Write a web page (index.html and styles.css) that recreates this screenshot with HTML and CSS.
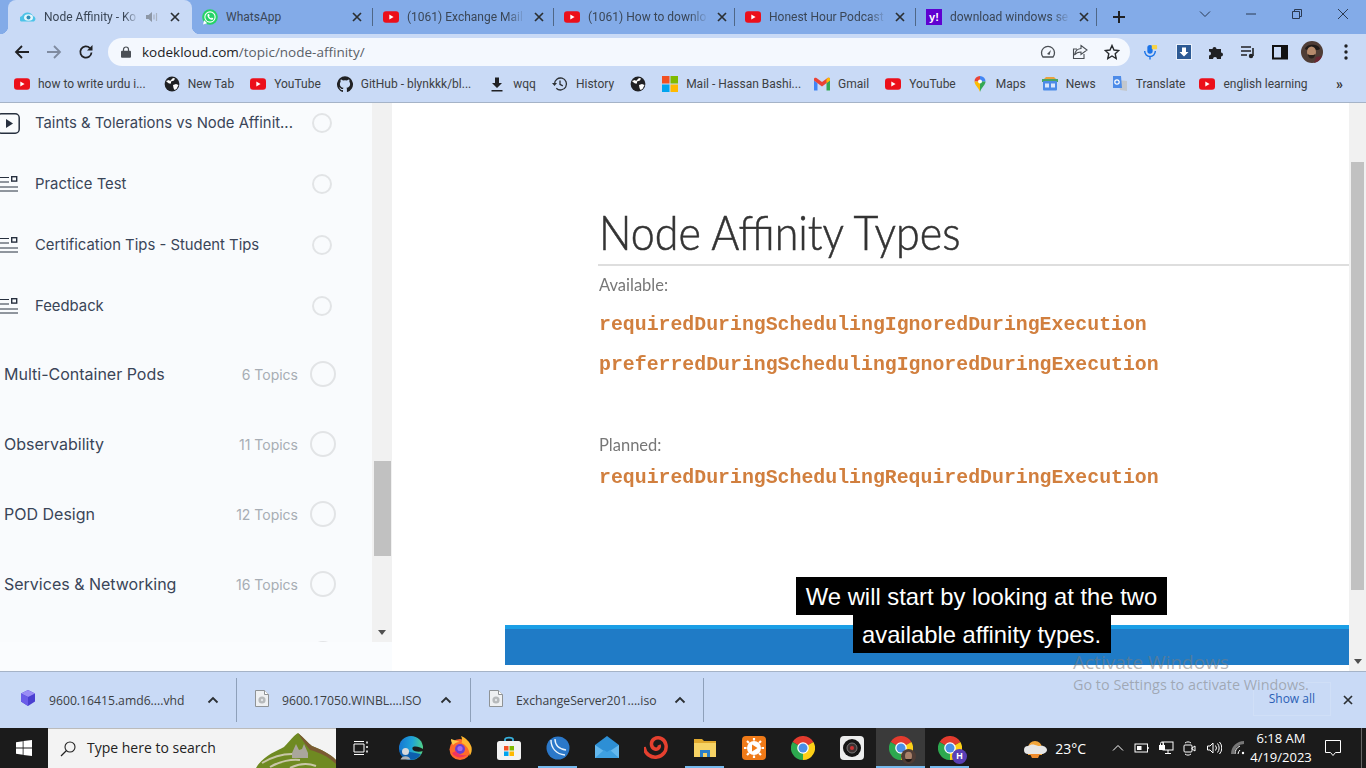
FILE: index.html
```html
<!DOCTYPE html>
<html lang="en">
<head>
<meta charset="utf-8">
<title>Node Affinity - KodeKloud</title>
<link rel="stylesheet" href="styles.css">
</head>
<body>
<svg class="defs" aria-hidden="true">
  <symbol id="yt" viewBox="0 0 16 12"><rect width="16" height="11.4" y=".3" rx="3" fill="#ec0f1a"/><path d="M6.3 3.6v4.8L10.6 6z" fill="#fff"/></symbol>
  <symbol id="x" viewBox="0 0 10 10"><path d="M1 1l8 8M9 1L1 9" stroke="#2b2f33" stroke-width="1.7" fill="none"/></symbol>
  <symbol id="globe" viewBox="0 0 16 16"><circle cx="8" cy="8" r="7.4" fill="#202124"/><path d="M2 5l3-1 1 1 3-3 2 .5-1 2-3 1 0 2-2 0-2-1.500zM9 9l3-1 2.500 1-2 4-2 1-1-2z" fill="#fff"/></symbol>
  <symbol id="chev" viewBox="0 0 12 8"><path d="M1.500 6.500L6 2l4.500 4.500" stroke="#2b2f33" stroke-width="1.800" fill="none"/></symbol>
  <symbol id="iso" viewBox="0 0 14 17"><path d="M.5.500h9l4 4v12H.5z" fill="#eef0f2" stroke="#8f9396"/><path d="M9.500.500v4h4" fill="#fff" stroke="#8f9396"/><circle cx="7" cy="10" r="3.600" fill="#b6b9bb"/><circle cx="7" cy="10" r="1.200" fill="#e4e6e8"/></symbol>
  <symbol id="lines" viewBox="0 0 18 16"><path d="M0 1.500h9M0 6h9M0 11h18M0 15h18" stroke="#27303f" stroke-width="1"/><rect x="11.700" y=".7" width="5" height="4.400" fill="none" stroke="#27303f" stroke-width="1.400"/></symbol>
  <symbol id="chrome" viewBox="0 0 24 24"><path d="M12 12L1.600 6A12 12 0 0 1 22.400 6z" fill="#e33b2e"/><path d="M12 12L1.600 6A12 12 0 0 0 12 24z" fill="#2da94f"/><path d="M12 12L22.400 6A12 12 0 0 1 12 24z" fill="#fdd017"/><circle cx="12" cy="12" r="5.800" fill="#fff"/><circle cx="12" cy="12" r="4.500" fill="#4a8fe7"/></symbol>
</svg>

<header class="tabstrip">
  <div class="tab tab-active">
    <svg class="ic16" viewBox="0 0 16 16"><path d="M1 12.500a3 3 0 0 1 1-5.500 6 6 0 0 1 11 0 3 3 0 0 1 1 5.500z" fill="#4cc3e8"/><ellipse cx="8.500" cy="8.500" rx="4.500" ry="3.200" fill="#e5f7fc"/><circle cx="8.500" cy="8.500" r="2" fill="#2f8fb8"/></svg>
    <span class="tab-title tab-fade">Node Affinity - Ko</span>
    <svg class="tab-sound" viewBox="0 0 14 12"><path d="M1 4h2.500L7 1v10L3.500 8H1z" fill="#8d97a6"/><path d="M9 3.500v5M11.500 2v8" stroke="#a9b3c2" stroke-width="1.200"/></svg>
    <svg class="tab-x"><use href="#x"/></svg>
  </div>
  <div class="tab">
    <svg class="ic16" viewBox="0 0 16 16"><circle cx="8" cy="8" r="7.800" fill="#25d366"/><circle cx="8" cy="8" r="5.700" fill="#fff"/><circle cx="8" cy="8" r="4.600" fill="#25d366"/><path d="M1 15.500l1.200-4.200 3 3z" fill="#fff"/><path d="M6.300 5c-.6.300-1 1-.8 2 .4 1.800 2.100 3.500 3.900 3.800.9.100 1.600-.3 1.800-1l.1-.6-1.500-.8-.6.800c-.9-.3-1.700-1.100-2.100-2l.6-.7-.7-1.600z" fill="#fff"/></svg>
    <span class="tab-title">WhatsApp</span>
    <svg class="tab-x"><use href="#x"/></svg>
  </div>
  <div class="tab">
    <svg class="ic16 yt-ic"><use href="#yt"/></svg>
    <span class="tab-title tab-fade">(1061) Exchange Mail</span>
    <svg class="tab-x"><use href="#x"/></svg>
  </div>
  <div class="tab">
    <svg class="ic16 yt-ic"><use href="#yt"/></svg>
    <span class="tab-title tab-fade">(1061) How to downlo</span>
    <svg class="tab-x"><use href="#x"/></svg>
  </div>
  <div class="tab">
    <svg class="ic16 yt-ic"><use href="#yt"/></svg>
    <span class="tab-title tab-fade">Honest Hour Podcast</span>
    <svg class="tab-x"><use href="#x"/></svg>
  </div>
  <div class="tab">
    <span class="yahoo">y!</span>
    <span class="tab-title tab-fade">download windows se</span>
    <svg class="tab-x"><use href="#x"/></svg>
  </div>
  <svg class="new-tab" viewBox="0 0 14 14"><path d="M7 1v12M1 7h12" stroke="#202124" stroke-width="2"/></svg>
  <div class="window-controls">
    <svg class="win-btn" viewBox="0 0 12 12"><path d="M1 3.500l5 5 5-5" stroke="#2b3a52" fill="none"/></svg>
    <svg class="win-btn" viewBox="0 0 12 12"><path d="M1 6h10" stroke="#2b3a52"/></svg>
    <svg class="win-btn" viewBox="0 0 12 12"><path d="M1.500 3.500h7v7h-7zM3.500 3.500v-2h7v7h-2" stroke="#2b3a52" fill="none"/></svg>
    <svg class="win-btn" viewBox="0 0 12 12"><path d="M1 1l10 10M11 1L1 11" stroke="#2b3a52" fill="none"/></svg>
  </div>
</header>

<nav class="toolbar">
  <svg class="nav-btn" viewBox="0 0 16 16"><path d="M15 8H2M8 2L2 8l6 6" stroke="#202124" stroke-width="1.800" fill="none"/></svg>
  <svg class="nav-btn" viewBox="0 0 16 16"><path d="M1 8h13M8 2l6 6-6 6" stroke="#7f8ba0" stroke-width="1.800" fill="none"/></svg>
  <svg class="nav-btn" viewBox="0 0 16 16"><path d="M13.500 8.500a5.600 5.600 0 1 1-1.600-4.400" stroke="#202124" stroke-width="1.800" fill="none"/><path d="M14.500 1v5.500H9z" fill="#202124"/></svg>
  <div class="omnibox">
    <svg class="lock" viewBox="0 0 10 12"><path d="M2.500 5V3.500a2.500 2.500 0 0 1 5 0V5" stroke="#4a4f55" stroke-width="1.200" fill="none"/><rect y="4.800" width="10" height="7" rx="1" fill="#4a4f55"/></svg>
    <span class="url"><span class="url-host">kodekloud.com</span>/topic/node-affinity/</span>
    <svg class="omni-ic" viewBox="0 0 16 16"><path d="M3 13a6.500 6.500 0 1 1 10 0z" fill="none" stroke="#4a4f55" stroke-width="1.300"/><path d="M7 10l4-4-1.500 5z" fill="#4a4f55"/></svg>
    <svg class="omni-ic" viewBox="0 0 16 16"><path d="M9 1.500L15 6l-6 4.500V8C6 8 4 9 2.500 11 3 7.500 5 5 9 4.500zM12 10v4.500H1.500V5H5" fill="none" stroke="#4a4f55" stroke-width="1.100"/></svg>
    <svg class="omni-ic omni-star" viewBox="0 0 16 16"><path d="M8 1.500l2 4.500 4.800.5-3.600 3.200 1 4.800L8 12l-4.200 2.500 1-4.800L1.200 6.500 6 6z" fill="none" stroke="#26292c" stroke-width="1.400"/></svg>
  </div>
  <div class="ext-row">
    <svg class="ext ext-mic" viewBox="0 0 16 18"><rect x="5" y="1" width="6" height="10" rx="3" fill="#1a73e8"/><path d="M2 8a6 6 0 0 0 12 0M8 14v3.500" stroke="#1a73e8" stroke-width="1.600" fill="none"/><rect x="10" y="1" width="6" height="5" rx="1" fill="#f8d347"/></svg>
    <svg class="ext" viewBox="0 0 16 16"><rect x=".5" y=".5" width="15" height="15" fill="#2d5a94" stroke="#eaf1fb"/><path d="M6 3.500h4V8h2.500L8 12.500 3.500 8H6z" fill="#fff"/></svg>
    <svg class="ext" viewBox="0 0 16 16"><path d="M1 5h3.500a2 2 0 1 1 4 0H13v3.500a2 2 0 1 1 0 4V15H9a2 2 0 1 0-4 0H1v-3.500a2 2 0 1 0 0-4z" fill="#202124"/></svg>
    <svg class="ext" viewBox="0 0 16 16"><path d="M1 3h10M1 7h10M1 11h6" stroke="#202124" stroke-width="1.400"/><path d="M13 4v8" stroke="#202124" stroke-width="1.600"/><circle cx="11" cy="12" r="2.200" fill="#202124"/></svg>
    <svg class="ext" viewBox="0 0 16 16"><rect x="1" y="2" width="14" height="12.500" fill="none" stroke="#111" stroke-width="2"/><rect x="9" y="2" width="6" height="12.500" fill="#111"/></svg>
    <svg class="avatar" viewBox="0 0 22 22"><circle cx="11" cy="11" r="11" fill="#4f3d36"/><path d="M4 8c1-5 13-6 15 0l-2 1H6z" fill="#1f1a18"/><ellipse cx="10.500" cy="11" rx="4.500" ry="5.500" fill="#b58a6c"/><path d="M6.500 13c1 6 7 6 8 0l-2 1h-4z" fill="#2a211d"/><path d="M13 22a11 11 0 0 0 8-7l-6 1z" fill="#6a2733"/></svg>
    <svg class="kebab" viewBox="0 0 4 16"><circle cx="2" cy="2" r="1.700" fill="#202124"/><circle cx="2" cy="8" r="1.700" fill="#202124"/><circle cx="2" cy="14" r="1.700" fill="#202124"/></svg>
  </div>
</nav>

<nav class="bookmarks">
  <a class="bm bm-wide"><svg class="ic16 yt-ic"><use href="#yt"/></svg>how to write urdu i...</a>
  <a class="bm"><svg class="ic16"><use href="#globe"/></svg>New Tab</a>
  <a class="bm"><svg class="ic16 yt-ic"><use href="#yt"/></svg>YouTube</a>
  <a class="bm bm-wide"><svg class="ic16" viewBox="0 0 16 16"><path d="M8 .300a8 8 0 0 0-2.500 15.600c.4 0 .5-.2.500-.4v-1.400c-2.200.5-2.700-1-2.700-1-.4-.9-.9-1.200-.9-1.200-.7-.5.100-.5.100-.5.800.1 1.200.8 1.200.8.700 1.200 1.900.9 2.300.7.100-.5.300-.9.500-1.100-1.800-.2-3.600-.9-3.600-4 0-.9.300-1.600.800-2.100-.1-.2-.4-1 .1-2.100 0 0 .7-.2 2.200.8a7.600 7.600 0 0 1 4 0c1.500-1 2.200-.8 2.200-.8.400 1.100.2 1.900.1 2.100.5.500.8 1.200.8 2.100 0 3.100-1.900 3.800-3.700 4 .3.300.5.700.5 1.500v2.200c0 .2.100.5.600.4A8 8 0 0 0 8 .300z" fill="#202124"/></svg>GitHub - blynkkk/bl...</a>
  <a class="bm"><svg class="ic16" viewBox="0 0 16 16"><path d="M6 1.500h4V7h3l-5 5-5-5h3zM2.500 14h11v1.400h-11z" fill="#202124"/></svg>wqq</a>
  <a class="bm"><svg class="ic16" viewBox="0 0 16 16"><path d="M2.500 8a6 6 0 1 1 1.800 4.300M8 4.500V8.300l2.800 1.600" stroke="#2b2f33" stroke-width="1.300" fill="none"/><path d="M0 7h5L2.500 10z" fill="#2b2f33"/></svg>History</a>
  <a class="bm"><svg class="ic16"><use href="#globe"/></svg></a>
  <a class="bm bm-mail"><svg class="ic16" viewBox="0 0 16 16"><rect width="7.500" height="7.500" fill="#f25022"/><rect x="8.500" width="7.500" height="7.500" fill="#7fba00"/><rect y="8.500" width="7.500" height="7.500" fill="#00a4ef"/><rect x="8.500" y="8.500" width="7.500" height="7.500" fill="#ffb900"/></svg>Mail - Hassan Bashi...</a>
  <a class="bm"><svg class="ic16" viewBox="0 0 16 13"><path d="M0 3v10h3.500V5.500z" fill="#4285f4"/><path d="M12.500 5.500V13H16V3z" fill="#34a853"/><path d="M0 1.500V3l8 6 8-6V1.500C16 .3 14.500-.3 13.500.5L8 4.500 2.500.5C1.500-.3 0 .3 0 1.500z" fill="#ea4335"/><path d="M12.500 2v3.500L16 3V1.500C16 .3 14.500-.3 13.500.5z" fill="#fbbc04"/></svg>Gmail</a>
  <a class="bm"><svg class="ic16 yt-ic"><use href="#yt"/></svg>YouTube</a>
  <a class="bm"><svg class="ic16" viewBox="0 0 16 16"><path d="M8 0a5.500 5.500 0 0 0-5.500 5.500L8 5.500z" fill="#ea4335"/><path d="M8 0a5.500 5.500 0 0 1 5.500 5.500L8 5.500z" fill="#4285f4"/><path d="M2.500 5.500c0 3.500 3.500 5 5.500 10.500V5.500z" fill="#fbbc04"/><path d="M13.500 5.500c0 3.500-3.500 5-5.500 10.500V5.500z" fill="#34a853"/><circle cx="8" cy="5.500" r="2" fill="#fff"/></svg>Maps</a>
  <a class="bm"><svg class="ic16" viewBox="0 0 16 16"><path d="M2 3l2-2h8l2 2z" fill="#e8a33d"/><rect y="3" width="16" height="3" fill="#4aa564"/><rect x="1" y="5" width="14" height="9.500" rx="1" fill="#4d8be8"/><rect x="3" y="7.500" width="4" height="4" fill="#dbe7fb"/><rect x="9" y="7.500" width="4" height="4" fill="#dbe7fb"/></svg>News</a>
  <a class="bm bm-translate"><svg class="ic16" viewBox="0 0 16 16"><path d="M6 4l9 1v10l-7-1z" fill="#c3c7cd"/><path d="M1 0h8l1 12H1z" fill="#4d8be8"/><circle cx="5" cy="6" r="2.200" fill="none" stroke="#fff" stroke-width="1.200"/></svg>Translate</a>
  <a class="bm"><svg class="ic16 yt-ic"><use href="#yt"/></svg>english learning</a>
  <span class="bm-more">»</span>
</nav>

<main class="page">
  <aside class="sidebar">
    <div class="sidebar-inner">
      <ul class="course">
        <li class="lesson">
          <svg class="lesson-ic" viewBox="0 0 20 21"><rect x="-3" y=".8" width="22.200" height="19.400" rx="4" fill="none" stroke="#27303f" stroke-width="1.500"/><path d="M6 6v9l7-4.500z" fill="#27303f"/></svg>
          <span class="lesson-name">Taints &amp; Tolerations vs Node Affinit...</span><span class="tick"></span>
        </li>
        <li class="lesson"><svg class="lesson-ic lesson-lines"><use href="#lines"/></svg><span class="lesson-name">Practice Test</span><span class="tick"></span></li>
        <li class="lesson"><svg class="lesson-ic lesson-lines"><use href="#lines"/></svg><span class="lesson-name">Certification Tips - Student Tips</span><span class="tick"></span></li>
        <li class="lesson"><svg class="lesson-ic lesson-lines"><use href="#lines"/></svg><span class="lesson-name">Feedback</span><span class="tick"></span></li>
        <li class="module module-first"><span class="module-name">Multi-Container Pods</span><span class="topics">6 Topics</span><span class="tick-lg"></span></li>
        <li class="module"><span class="module-name">Observability</span><span class="topics">11 Topics</span><span class="tick-lg"></span></li>
        <li class="module"><span class="module-name">POD Design</span><span class="topics">12 Topics</span><span class="tick-lg"></span></li>
        <li class="module"><span class="module-name">Services &amp; Networking</span><span class="topics">16 Topics</span><span class="tick-lg"></span></li>
        <li class="module"><span class="module-name"></span><span class="topics"></span><span class="tick-lg"></span></li>
      </ul>
      <div class="side-scroll">
        <div class="side-thumb"></div>
        <svg class="scroll-arrow" viewBox="0 0 8 5"><path d="M0 0h8L4 5z" fill="#505050"/></svg>
      </div>
    </div>
  </aside>

  <section class="video">
    <div class="slide">
      <h1 class="slide-title"><span class="slide-title-text">Node Affinity Types</span></h1>
      <p class="slide-label label-available">Available:</p>
      <p class="code code-one">requiredDuringSchedulingIgnoredDuringExecution</p>
      <p class="code code-two">preferredDuringSchedulingIgnoredDuringExecution</p>
      <p class="slide-label label-planned">Planned:</p>
      <p class="code code-three">requiredDuringSchedulingRequiredDuringExecution</p>
    </div>
    <div class="slide-bar"></div>
    <div class="captions">
      <span class="cap cap-one">We will start by looking at the two</span>
      <span class="cap cap-two">available affinity types.</span>
    </div>
  </section>

  <div class="main-scroll">
    <div class="main-thumb"></div>
    <svg class="scroll-arrow" viewBox="0 0 8 5"><path d="M0 0h8L4 5z" fill="#505050"/></svg>
  </div>
</main>

<footer class="downloads">
  <div class="dl dl-first">
    <svg class="dl-ic-cube" viewBox="0 0 16 16"><path d="M8 0l7 3.500v8L8 16l-7-4.500v-8z" fill="#4a3fd0"/><path d="M8 0l7 3.500L8 7 1 3.500z" fill="#9a8df5"/><path d="M1 3.500L8 7v9l-7-4.500z" fill="#6a5ce8"/></svg>
    <span class="dl-name">9600.16415.amd6....vhd</span>
    <svg class="dl-chev"><use href="#chev"/></svg>
  </div>
  <div class="dl dl-iso">
    <svg class="dl-ic"><use href="#iso"/></svg>
    <span class="dl-name">9600.17050.WINBL....ISO</span>
    <svg class="dl-chev"><use href="#chev"/></svg>
  </div>
  <div class="dl dl-iso dl-last">
    <svg class="dl-ic"><use href="#iso"/></svg>
    <span class="dl-name">ExchangeServer201....iso</span>
    <svg class="dl-chev"><use href="#chev"/></svg>
  </div>
  <div class="show-all-box"><a class="show-all">Show all</a></div>
  <svg class="dl-close"><use href="#x"/></svg>
</footer>

<footer class="taskbar">
  <div class="start"><svg class="start-ic" viewBox="0 0 16 16"><path d="M0 2.200l6.700-1V7.600H0zM7.500 1.100L16 0v7.600H7.500zM0 8.400h6.700v6.400l-6.700-1zM7.500 8.400H16V16l-8.500-1.100z" fill="#fff"/></svg></div>
  <div class="search">
    <svg class="search-ic" viewBox="0 0 16 16"><circle cx="10" cy="6" r="5" fill="none" stroke="#222" stroke-width="1.100"/><path d="M6.500 9.500L1 15" stroke="#222" stroke-width="1.300"/></svg>
    <span class="search-text">Type here to search</span>
    <svg class="scene" viewBox="0 0 80 35"><path d="M0 35C6 24 20 18 28 14 34 8 38 2 42 0c6 5 10 10 14 13 10 4 18 8 24 14v8z" fill="#6f8a22"/><path d="M42 0c6 5 10 10 14 13 10 4 18 8 24 14v4c-8-8-18-12-26-14-4-5-8-10-12-17z" fill="#7a5a32"/><path d="M6 30c10-6 20-9 30-9M14 34c10-6 22-8 30-7M34 35c8-4 18-5 26-2" stroke="#c9c7a8" stroke-width="2" fill="none"/><path d="M36 20l4-9 3 6 3-1 2-5 4 9v5H36z" fill="#aaa69c"/></svg>
  </div>
  <div class="apps">
    <div class="app app-first"><svg class="task-view" viewBox="0 0 16 16"><path d="M1 4h10v8H1zM1 1.500h10M1 14.500h10" stroke="#fff" fill="none"/><path d="M14 1.500v2M14 6v2M14 10.500v2" stroke="#fff" stroke-width="1.500"/></svg></div>
    <div class="app"><svg class="app-ic" viewBox="0 0 24 24"><defs><linearGradient id="edge" x1="0" y1=".2" x2="1" y2=".3"><stop offset="0" stop-color="#1576d2"/><stop offset=".55" stop-color="#1fa3d8"/><stop offset="1" stop-color="#4fd08a"/></linearGradient></defs><circle cx="12" cy="12" r="12" fill="url(#edge)"/><path d="M0 14a12 12 0 0 0 22 4z" fill="#0d5fae"/><path d="M14 11c3-1 7 0 10 2v2c-3 1-8 1-10-1-.8-1-.8-2.500 0-3z" fill="#1b1b1b"/><circle cx="6.500" cy="15.500" r="3.500" fill="#d5d8dc"/><path d="M1.500 23.500a5.500 5.500 0 0 1 10 0z" fill="#aeb3b9"/></svg></div>
    <div class="app"><svg class="app-ic" viewBox="0 0 24 24"><circle cx="12" cy="13.500" r="10.500" fill="#ff6a2b"/><path d="M13 0c5 2 9 6 10.500 11 .8 4-.5 7-2 9 .5-6-3-11-8-13 1-2 .5-5-.5-7z" fill="#ffb52e"/><path d="M3 3c0 2 .5 4 2 6 2-2 4-3 7-3-3-1-6-2-9-3z" fill="#ffc94a"/><circle cx="12" cy="13" r="5" fill="#6b3ed0"/><circle cx="12" cy="12.500" r="2.600" fill="#a06bf0"/><path d="M4 17c3 5 10 6 15 2-4 1-9 0-11-4z" fill="#f0345f"/></svg></div>
    <div class="app"><svg class="app-ic" viewBox="0 0 24 24"><path d="M8 6V3.500C8 1 16 1 16 3.500V6" stroke="#37b0dc" stroke-width="1.800" fill="none"/><rect y="5" width="24" height="19" rx="2.500" fill="#f3f3f3"/><rect x="7" y="10" width="4.500" height="4.500" fill="#f25022"/><rect x="12.500" y="10" width="4.500" height="4.500" fill="#7fba00"/><rect x="7" y="15.500" width="4.500" height="4.500" fill="#00a4ef"/><rect x="12.500" y="15.500" width="4.500" height="4.500" fill="#ffb900"/></svg></div>
    <div class="app app-open"><svg class="app-ic" viewBox="0 0 24 24"><circle cx="12" cy="12" r="11.500" fill="#2b78c9"/><path d="M5 4c0 8 5 14 14 15M9 3c0 6 4 10 11 11" stroke="#e9f3fc" stroke-width="1.400" fill="none"/></svg></div>
    <div class="app"><svg class="app-ic" viewBox="0 0 24 24"><path d="M0 9L12 0l12 9v13H0z" fill="#2d8fd5"/><path d="M0 9l12 8 12-8v13H0z" fill="#64b8ee"/><path d="M0 22l9-8 3 2 3-2 9 8z" fill="#3ea1e2"/></svg></div>
    <div class="app"><svg class="app-ic" viewBox="0 0 24 24"><path d="M0 11c1 7 7 11 13 10 6-1 10-6 9-12C21 3 15 0 10 3 6 6 7 12 11 13c3 1 5-2 4-4" stroke="#e5402f" stroke-width="3.500" fill="none"/></svg></div>
    <div class="app app-open"><svg class="app-ic" viewBox="0 0 24 24"><path d="M1 3h8l2 2h12v7H1z" fill="#e0a92e"/><rect x="1" y="7" width="22" height="14" fill="#f6d365"/><rect x="7" y="14" width="10" height="7" fill="#2b80c9"/><rect x="10" y="17" width="4" height="4" fill="#f6d365"/></svg></div>
    <div class="app"><svg class="app-ic" viewBox="0 0 24 24"><rect width="24" height="24" rx="4" fill="#ef7a18"/><circle cx="12" cy="12" r="7" fill="#fff"/><path d="M10 8.500v7l5.500-3.500z" fill="#ef7a18"/><g stroke="#fff" stroke-width="2.200"><path d="M12 2v2.500M12 19.500V22M2 12h2.500M19.500 12H22M5 5l2 2M17 17l2 2M19 5l-2 2M7 17l-2 2"/></g></svg></div>
    <div class="app"><svg class="app-ic"><use href="#chrome"/></svg></div>
    <div class="app"><svg class="app-ic" viewBox="0 0 24 24"><rect width="24" height="24" rx="4" fill="#eceded"/><circle cx="12" cy="12" r="9" fill="#151515"/><circle cx="12" cy="12" r="5" fill="#3c3232" stroke="#777"/><circle cx="12" cy="12" r="2" fill="#c33"/></svg></div>
    <div class="app app-active"><svg class="app-ic"><use href="#chrome"/></svg><svg class="badge" viewBox="0 0 15 15"><circle cx="7.500" cy="7.500" r="7.500" fill="#4f3d36"/><ellipse cx="7.500" cy="7" rx="3.500" ry="4.200" fill="#a9816a"/><path d="M4 10c1 4 6 4 7 0z" fill="#221a17"/></svg></div>
    <div class="app app-open"><svg class="app-ic"><use href="#chrome"/></svg><span class="badge badge-h">H</span></div>
  </div>
  <div class="tray">
    <svg class="weather" viewBox="0 0 24 20"><path d="M5 10a7 7 0 0 1 14 0v7H5z" fill="#f2a53a"/><path d="M5 16a4 4 0 0 1 0-8c2-1 4-2 7-1s4 1 5 1c4-1 7 2 7 4s-3 4-5 4z" fill="#e6e6e6"/><path d="M7 16h10l-2 4H9z" fill="#ef8b2c"/></svg>
    <span class="temp">23°C</span>
    <svg class="tray-caret" viewBox="0 0 12 8"><path d="M1 6.500L6 1.500l5 5" stroke="#fff" fill="none"/></svg>
    <svg class="tray-ic" viewBox="0 0 16 16"><rect x="1" y="4" width="12.500" height="8" fill="none" stroke="#fff"/><rect x="3" y="6" width="4.500" height="4" fill="#fff"/><path d="M14 7v2" stroke="#fff" stroke-width="1.400"/></svg>
    <svg class="tray-ic" viewBox="0 0 16 16"><rect x="5" y="2" width="10" height="8" fill="none" stroke="#fff"/><rect x="1" y="5" width="6" height="5" fill="#fff"/><path d="M2.500 5V3.500a1.500 1.500 0 0 1 3 0V5M10 10v3M7 13.500h6" stroke="#fff" fill="none"/></svg>
    <svg class="tray-ic" viewBox="0 0 16 16"><rect x="2" y="5" width="8" height="7" rx="1" fill="none" stroke="#fff"/><path d="M10 8l3-2v5l-3-2zM3 3c2-1.500 4-1.500 6 0M3 14c2 1.500 4 1.500 6 0" stroke="#fff" fill="none"/></svg>
    <svg class="tray-ic" viewBox="0 0 16 16"><path d="M1.500 6h2.500l3-3v10l-3-3H1.500z" fill="none" stroke="#fff"/><path d="M9.500 5.500a4 4 0 0 1 0 5M11.500 3.500a7 7 0 0 1 0 9M13.500 2a9 9 0 0 1 0 12" stroke="#fff" fill="none"/></svg>
    <svg class="tray-ic tray-wifi" viewBox="0 0 16 16"><path d="M1 14A13 13 0 0 1 14 1v3A10 10 0 0 0 4 14z" fill="#777"/><path d="M5 14a9 9 0 0 1 5-8M8 14a6 6 0 0 1 2-4" stroke="#fff" fill="none"/><circle cx="13" cy="13" r="1.200" fill="#fff"/></svg>
    <div class="clock"><span>6:18 AM</span><span>4/19/2023</span></div>
    <svg class="notify" viewBox="0 0 18 18"><path d="M1.500 1.500h15v12h-5L9 16.500 6.500 13.500h-5z" fill="none" stroke="#fff"/></svg>
    <span class="show-desktop"></span>
  </div>
</footer>

<div class="watermark">
  <span class="wm-title">Activate Windows</span>
  <span class="wm-sub">Go to Settings to activate Windows.</span>
</div>
</body>
</html>
```
FILE: styles.css
```css
* { box-sizing: border-box; }
html, body { margin: 0; padding: 0; }
body {
  width: 1366px;
  height: 768px;
  overflow: hidden;
  position: relative;
  display: flex;
  flex-direction: column;
  font-family: "Open Sans", "Noto Sans", sans-serif;
  background: #fff;
}
.defs { display: none; }
svg { display: block; flex: none; overflow: hidden; }
.ic16 { width: 16px; height: 16px; }

/* tab strip */
.tabstrip {
  height: 34px;
  flex: none;
  display: flex;
  align-items: stretch;
  padding-left: 8px;
  background: #83abe8;
}
.tab {
  width: 181px;
  padding: 0 11px 0 10px;
  display: flex;
  align-items: center;
  gap: 8px;
  position: relative;
  font: 12px Roboto, "Open Sans", sans-serif;
  color: #3a4656;
}
.tab::after {
  content: "";
  position: absolute;
  right: 0;
  top: 8px;
  bottom: 8px;
  width: 1px;
  background: #4f6787;
}
.tab-active {
  width: 184px;
  padding: 0 12px;
  background: #c9daf6;
  border-radius: 8px 8px 0 0;
}
.tab-active::before, .tab-active::after {
  content: "";
  position: absolute;
  top: auto;
  bottom: 0;
  width: 8px;
  height: 8px;
}
.tab-active::before {
  left: -8px;
  background: radial-gradient(circle at 0 0, transparent 8px, #c9daf6 8.500px);
}
.tab-active::after {
  right: -8px;
  background: radial-gradient(circle at 100% 0, transparent 8px, #c9daf6 8.500px);
}
.tab-title { flex: 1; white-space: nowrap; }
.tab-fade {
  -webkit-mask-image: linear-gradient(90deg, #000 86%, transparent 102%);
  mask-image: linear-gradient(90deg, #000 86%, transparent 102%);
}
.tab-sound { width: 14px; height: 12px; }
.tab-x { width: 10px; height: 10px; margin-left: 3px; }
.yt-ic { height: 12px; }
.yahoo {
  width: 16px;
  height: 16px;
  flex: none;
  background: #5f01d1;
  color: #fff;
  font: bold 11px/16px "Liberation Sans", sans-serif;
  text-align: center;
}
.new-tab { width: 14px; height: 14px; margin: 10px 0 0 15px; }
.window-controls { margin-left: auto; display: flex; padding: 8px 17px 0 0; gap: 34px; }
.win-btn { width: 12px; height: 12px; }

/* toolbar */
.toolbar {
  height: 35px;
  flex: none;
  display: flex;
  align-items: center;
  padding-left: 14px;
  background: #c9daf6;
  gap: 16px;
}
.nav-btn { width: 16px; height: 16px; }
.omnibox {
  width: 1022px;
  height: 28px;
  margin-left: -2px;
  display: flex;
  align-items: center;
  padding-left: 13px;
  background: #f4f8fe;
  border-radius: 14px;
}
.lock { width: 10px; height: 12px; }
.url { margin-left: 11px; font-size: 13.500px; color: #5a6068; flex: 1; }
.url-host { color: #202124; }
.omni-ic { width: 16px; height: 16px; margin-right: 16px; }
.omni-star { margin-right: 10px; }
.ext-row { display: flex; align-items: center; margin-left: -4px; }
.ext { width: 16px; height: 16px; margin-right: 16px; }
.ext-mic { margin-right: 18px; }
.avatar { width: 22px; height: 22px; margin-left: -3px; }
.kebab { width: 4px; height: 16px; margin-left: 21px; }

/* bookmarks */
.bookmarks {
  height: 34px;
  flex: none;
  display: flex;
  align-items: center;
  gap: 16px;
  padding: 0 0 4px 14px;
  background: #c9daf6;
  border-bottom: 1px solid #a5b3c7;
  font: 12px Roboto, "Open Sans", sans-serif;
  color: #3c4043;
}
.bm { display: flex; align-items: center; gap: 8px; white-space: nowrap; }
.bm-wide { margin-right: 2px; }
.bm-mail { margin-right: -3px; }
.bm-translate { margin-right: -2px; }
.bm-more { margin-left: auto; margin-right: 23px; font-weight: 700; font-size: 14px; color: #333; }

/* page */
.page {
  height: 568px;
  flex: none;
  display: flex;
  background: #fff;
}
.sidebar {
  width: 392px;
  flex: none;
  background: #fafcfe;
}
.sidebar-inner { height: 539px; display: flex; }
.course {
  list-style: none;
  margin: 0;
  padding: 0;
  width: 372px;
  height: 539px;
  overflow: hidden;
  flex: none;
  background: #f9fbfd;
  font-family: Inter, "Liberation Sans", sans-serif;
  color: #3a4558;
}
.lesson {
  height: 40px;
  margin-bottom: 21px;
  display: flex;
  align-items: center;
  font-size: 14.850px;
}
.lesson-ic { width: 20px; height: 21px; }
.lesson-lines { width: 18px; height: 16px; margin-right: 2px; }
.lesson-name { margin-left: 15px; flex: 1; white-space: nowrap; }
.tick {
  width: 20px;
  height: 20px;
  margin-right: 40px;
  flex: none;
  border-radius: 50%;
  border: 2px solid #e2e4e6;
}
.module {
  height: 40px;
  margin-bottom: 30px;
  display: flex;
  align-items: center;
  padding-left: 4px;
  font-size: 16px;
}
.module-first { margin-top: 28px; }
.module-name { flex: 1; white-space: nowrap; }
.topics { font-size: 14px; color: #a7adb4; }
.tick-lg {
  width: 26px;
  height: 26px;
  margin: 0 36px 0 12px;
  flex: none;
  border-radius: 50%;
  border: 2.500px solid #e2e4e6;
}
.side-scroll {
  width: 20px;
  flex: none;
  height: 539px;
  background: #f1f1f1;
  display: flex;
  flex-direction: column;
  align-items: center;
  padding-top: 358px;
}
.side-thumb { width: 17px; height: 95px; background: #c1c1c1; }
.side-scroll .scroll-arrow { margin-top: 74px; }
.scroll-arrow { width: 8px; height: 5px; }

.video {
  width: 957px;
  flex: none;
  position: relative;
  height: 568px;
}
.slide { margin-left: 206px; padding-top: 106px; }
.slide-title {
  height: 57px;
  margin: 0;
  font: 300 43px/50px Lato, "Open Sans", sans-serif;
  color: #333;
  padding-left: 1px;
  border-bottom: 2px solid #dedede;
  filter: blur(.3px);
}
.slide-title-text {
  display: inline-block;
  -webkit-text-stroke: .5px #333;
  transform: scaleY(1.1);
  transform-origin: 0 80%;
}
.slide-label {
  margin: 0;
  font: 400 16.500px/20px Lato, "Open Sans", sans-serif;
  color: #777;
  padding-left: 1px;
  filter: blur(.3px);
}
.label-available { margin-top: 9px; }
.label-planned { margin-top: 58px; }
.code {
  margin: 0;
  padding-left: 1px;
  font: 700 19.850px/24px "Liberation Mono", monospace;
  color: #d17f3e;
  white-space: nowrap;
  filter: blur(.3px);
}
.code-one { margin-top: 18px; }
.code-two { margin-top: 16px; }
.code-three { margin-top: 11px; }
.slide-bar {
  margin: 135px 0 0 113px;
  height: 40px;
  background: #1f7bc6;
  border-top: 4px solid #1b9fe6;
}
.captions {
  position: absolute;
  left: 404px;
  top: 474px;
  width: 371px;
  display: flex;
  flex-direction: column;
  align-items: center;
  font: 23.800px/39px "Liberation Sans", sans-serif;
  color: #fff;
}
.cap { background: #000; height: 38px; padding: 0 9.500px; white-space: nowrap; }

.main-scroll {
  width: 17px;
  flex: none;
  height: 568px;
  background: #f1f1f1;
  display: flex;
  flex-direction: column;
  align-items: center;
  padding-top: 59px;
}
.main-thumb { width: 13px; height: 428px; background: #c1c1c1; }
.main-scroll .scroll-arrow { margin-top: 69px; }

/* downloads */
.downloads {
  height: 57px;
  flex: none;
  display: flex;
  align-items: center;
  background: #c9daf6;
  border-top: 1px solid #a5b3c7;
  font-size: 12.200px;
  color: #3c4043;
}
.dl {
  height: 44px;
  display: flex;
  align-items: center;
  border-right: 1px solid #8ea0ba;
}
.dl-first { width: 237px; padding-left: 20px; }
.dl-iso { width: 234px; padding-left: 18px; }
.dl-last { width: 233px; }
.dl-ic-cube { width: 16px; height: 16px; margin-right: 13px; margin-top: -4px; }
.dl-ic { width: 14px; height: 17px; margin-right: 13px; margin-top: -3px; }
.dl-name { white-space: nowrap; width: 158px; }
.dl-chev { width: 12px; height: 8px; }
.show-all-box {
  margin: 0 12px 3px auto;
  padding: 10px 15px;
  border: 1px solid rgba(255, 255, 255, .14);
  display: flex;
}
.show-all { color: #2b5fb5; font-size: 12px; line-height: 12px; }
.dl-close { width: 10px; height: 10px; margin: 0 13px 1px 0; }

/* taskbar */
.taskbar {
  height: 40px;
  flex: none;
  display: flex;
  background: #1b1b1b;
  color: #fff;
}
.start { width: 48px; display: flex; align-items: center; justify-content: center; }
.start-ic { width: 16px; height: 16px; }
.search {
  width: 288px;
  position: relative;
  display: flex;
  align-items: center;
  padding-left: 12px;
  background: #f3f3f3;
  border-top: 1px solid #bbb;
  overflow: hidden;
  color: #222;
}
.search-ic { width: 16px; height: 16px; }
.search-text { margin: -2px 0 0 11px; font-size: 14px; }
.scene { width: 80px; height: 35px; margin-left: auto; align-self: flex-end; }
.apps { display: flex; }
.app {
  width: 49px;
  display: flex;
  align-items: center;
  justify-content: center;
  position: relative;
}
.app-first { width: 50px; }
.app-open::after, .app-active::after {
  content: "";
  position: absolute;
  bottom: 0;
  left: 5px;
  right: 5px;
  height: 2px;
  background: #76b9ed;
}
.app-active { background: #3a3a3a; }
.app-active::after { left: 0; right: 0; }
.task-view { width: 16px; height: 16px; }
.app-ic { width: 24px; height: 24px; }
.badge { position: absolute; right: 9px; bottom: 4px; width: 15px; height: 15px; }
.badge-h {
  right: 7px;
  border-radius: 50%;
  background: #5a3fb5;
  color: #fff;
  font: 700 9px/15px "Liberation Sans", sans-serif;
  text-align: center;
}
.tray { margin-left: auto; display: flex; align-items: center; font-size: 13px; }
.weather { width: 24px; height: 20px; margin-right: 8px; }
.temp { font-size: 14px; margin-right: 26px; }
.tray-caret { width: 12px; height: 8px; margin-right: 10px; }
.tray-ic { width: 16px; height: 16px; margin-right: 8px; }
.tray-wifi { margin-right: 2px; }
.clock {
  width: 66px;
  display: flex;
  flex-direction: column;
  align-items: center;
  line-height: 19px;
}
.notify { width: 18px; height: 18px; margin: 0 19px 0 10px; }
.show-desktop { width: 1px; height: 40px; background: #666; margin-right: 4px; }

/* watermark */
.watermark {
  position: absolute;
  left: 1073px;
  top: 650px;
  display: flex;
  flex-direction: column;
  color: rgba(125, 125, 125, .55);
  white-space: nowrap;
  pointer-events: none;
}
.wm-title { font-size: 19px; line-height: 24px; }
.wm-sub { font-size: 14.400px; line-height: 14px; margin-top: 4px; }
```
